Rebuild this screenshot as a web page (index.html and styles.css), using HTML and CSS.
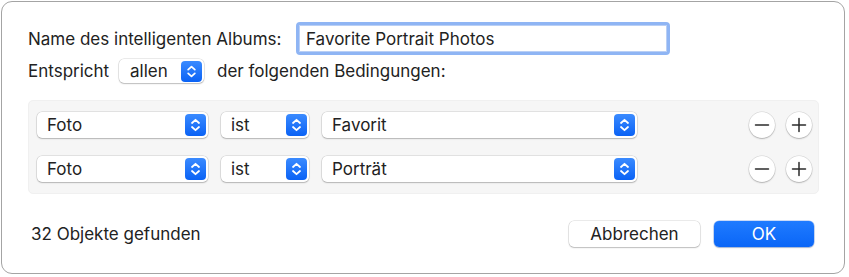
FILE: index.html
```html
<!DOCTYPE html>
<html lang="de">
<head>
<meta charset="utf-8">
<title>Intelligentes Album</title>
<link rel="stylesheet" href="styles.css">
</head>
<body>
<div class="window">
  <div class="row name-row">
    <span class="lbl name-lbl">Name des intelligenten Albums:</span>
    <div class="field">Favorite Portrait Photos</div>
  </div>
  <div class="row match-row">
    <span class="lbl match-lbl">Entspricht</span>
    <div class="popup popup-all"><span class="popup-text">allen</span><span class="stepper"><svg viewBox="0 0 21 22" width="21" height="22"><path d="M7 9 L10.5 5.8 L14 9 M7 13 L10.5 16.2 L14 13" fill="none" stroke="#fff" stroke-width="1.8" stroke-linecap="round" stroke-linejoin="round"/></svg></span></div>
    <span class="lbl after-lbl">der folgenden Bedingungen:</span>
  </div>
  <div class="criteria">
    <div class="crit-row">
      <div class="popup popup-key"><span class="popup-text">Foto</span><span class="stepper"><svg viewBox="0 0 21 22" width="21" height="22"><path d="M7 9 L10.5 5.8 L14 9 M7 13 L10.5 16.2 L14 13" fill="none" stroke="#fff" stroke-width="1.8" stroke-linecap="round" stroke-linejoin="round"/></svg></span></div>
      <div class="popup popup-op"><span class="popup-text">ist</span><span class="stepper"><svg viewBox="0 0 21 22" width="21" height="22"><path d="M7 9 L10.5 5.8 L14 9 M7 13 L10.5 16.2 L14 13" fill="none" stroke="#fff" stroke-width="1.8" stroke-linecap="round" stroke-linejoin="round"/></svg></span></div>
      <div class="popup popup-val"><span class="popup-text">Favorit</span><span class="stepper"><svg viewBox="0 0 21 22" width="21" height="22"><path d="M7 9 L10.5 5.8 L14 9 M7 13 L10.5 16.2 L14 13" fill="none" stroke="#fff" stroke-width="1.8" stroke-linecap="round" stroke-linejoin="round"/></svg></span></div>
      <div class="round-btns">
        <button class="round"><svg viewBox="0 0 26 26" width="26" height="26"><path d="M6.5 13 H19.5" stroke="#2b2b2b" stroke-width="1.5" stroke-linecap="round"/></svg></button>
        <button class="round"><svg viewBox="0 0 26 26" width="26" height="26"><path d="M6.5 13 H19.5 M13 6.5 V19.5" stroke="#2b2b2b" stroke-width="1.5" stroke-linecap="round"/></svg></button>
      </div>
    </div>
    <div class="crit-row">
      <div class="popup popup-key"><span class="popup-text">Foto</span><span class="stepper"><svg viewBox="0 0 21 22" width="21" height="22"><path d="M7 9 L10.5 5.8 L14 9 M7 13 L10.5 16.2 L14 13" fill="none" stroke="#fff" stroke-width="1.8" stroke-linecap="round" stroke-linejoin="round"/></svg></span></div>
      <div class="popup popup-op"><span class="popup-text">ist</span><span class="stepper"><svg viewBox="0 0 21 22" width="21" height="22"><path d="M7 9 L10.5 5.8 L14 9 M7 13 L10.5 16.2 L14 13" fill="none" stroke="#fff" stroke-width="1.8" stroke-linecap="round" stroke-linejoin="round"/></svg></span></div>
      <div class="popup popup-val"><span class="popup-text">Porträt</span><span class="stepper"><svg viewBox="0 0 21 22" width="21" height="22"><path d="M7 9 L10.5 5.8 L14 9 M7 13 L10.5 16.2 L14 13" fill="none" stroke="#fff" stroke-width="1.8" stroke-linecap="round" stroke-linejoin="round"/></svg></span></div>
      <div class="round-btns">
        <button class="round"><svg viewBox="0 0 26 26" width="26" height="26"><path d="M6.5 13 H19.5" stroke="#2b2b2b" stroke-width="1.5" stroke-linecap="round"/></svg></button>
        <button class="round"><svg viewBox="0 0 26 26" width="26" height="26"><path d="M6.5 13 H19.5 M13 6.5 V19.5" stroke="#2b2b2b" stroke-width="1.5" stroke-linecap="round"/></svg></button>
      </div>
    </div>
  </div>
  <div class="footer">
    <span class="count">32 Objekte gefunden</span>
    <div class="actions">
      <button class="btn btn-cancel">Abbrechen</button>
      <button class="btn btn-ok">OK</button>
    </div>
  </div>
</div>
</body>
</html>
```

FILE: styles.css
```css
html, body {
  margin: 0;
  padding: 0;
  background: #ffffff;
}

body {
  font-family: Inter, "Liberation Sans", sans-serif;
  font-size: 17px;
  color: #222222;
}

.window {
  box-sizing: border-box;
  width: 844px;
  height: 273px;
  margin: 1px 0 0 1px;
  border: 1px solid #a4a4a4;
  border-radius: 11px;
  background: #ffffff;
  padding: 20px 25px 0 26px;
  display: flex;
  flex-direction: column;
}

.row {
  display: flex;
  align-items: center;
}

.lbl {
  white-space: nowrap;
}

.name-row {
  height: 33px;
}

.name-lbl {
  width: 268px;
  flex: none;
}

.field {
  box-sizing: border-box;
  width: 374px;
  height: 33px;
  border: 3px solid #8fb5f4;
  border-radius: 4px;
  padding: 0 7px;
  display: flex;
  align-items: center;
  background: #fff;
  box-shadow: inset 0 0 0 1px #b9cff5;
}

.match-row {
  height: 24px;
  margin-top: 4px;
}

.match-lbl {
  width: 91px;
  flex: none;
}

.after-lbl {
  margin-left: 13px;
}

.popup {
  box-sizing: border-box;
  display: flex;
  align-items: center;
  justify-content: space-between;
  background: #ffffff;
  border-radius: 5px;
  box-shadow: 0 0 0 0.5px rgba(0, 0, 0, 0.16), 0 1px 1.5px rgba(0, 0, 0, 0.2);
  padding: 0 2px 0 10px;
  flex: none;
}

.popup-all {
  width: 85px;
  height: 24px;
  padding-left: 11px;
}

.popup-all .stepper {
  height: 21px;
}

.popup-all .stepper svg {
  height: 21px;
}

.popup-text {
  white-space: nowrap;
}

.stepper {
  width: 21px;
  height: 22px;
  border-radius: 4px;
  background: linear-gradient(#3b8bff, #0a62f5);
  display: flex;
  align-items: center;
  justify-content: center;
}

.stepper svg {
  display: block;
}

.criteria {
  box-sizing: border-box;
  height: 94px;
  margin-top: 17px;
  background: #f6f6f6;
  border: 1px solid #f0f0f0;
  border-radius: 5px;
  padding: 11px 6px 11px 8px;
  display: flex;
  flex-direction: column;
  gap: 18px;
}

.crit-row {
  display: flex;
  align-items: center;
  height: 26px;
  gap: 13px;
}

.crit-row .popup {
  height: 26px;
}

.popup-key {
  width: 171px;
}

.popup-op {
  width: 88px;
}

.popup-val {
  width: 315px;
}

.round-btns {
  margin-left: auto;
  display: flex;
  gap: 11px;
}

.round {
  width: 26px;
  height: 26px;
  padding: 0;
  border: none;
  border-radius: 50%;
  background: #ffffff;
  box-shadow: 0 0 0 0.5px rgba(0, 0, 0, 0.14), 0 1px 1.5px rgba(0, 0, 0, 0.22);
  display: flex;
  align-items: center;
  justify-content: center;
}

.round svg {
  display: block;
}

.footer {
  margin-top: 27px;
  height: 26px;
  display: flex;
  align-items: center;
  padding: 0 5px 0 3px;
}

.actions {
  margin-left: auto;
  display: flex;
  gap: 14px;
}

.btn {
  font-family: inherit;
  font-size: 17px;
  height: 26px;
  border: none;
  border-radius: 5px;
  padding: 0;
}

.btn-cancel {
  width: 131px;
  background: #ffffff;
  color: #222222;
  box-shadow: 0 0 0 0.5px rgba(0, 0, 0, 0.16), 0 1px 1.5px rgba(0, 0, 0, 0.2);
}

.btn-ok {
  width: 100px;
  color: #ffffff;
  background: linear-gradient(#1f7bff, #0a66f7);
  box-shadow: 0 0 0 0.5px rgba(0, 80, 220, 0.4), 0 1px 1.5px rgba(0, 0, 0, 0.2);
}
```
